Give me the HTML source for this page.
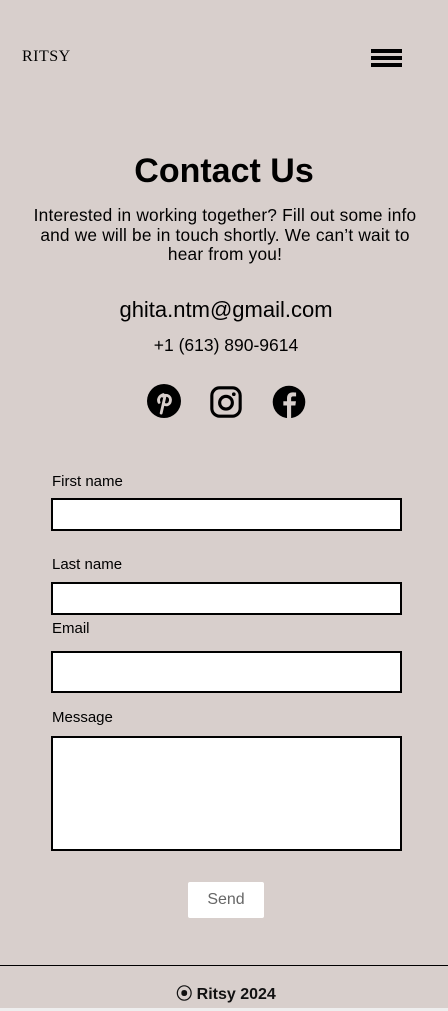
<!DOCTYPE html>
<html><head><style>
*{margin:0;padding:0;box-sizing:border-box}
body{width:448px;height:1011px;background:#d8cfcc;font-family:"Liberation Sans",sans-serif;color:#000;position:relative;overflow:hidden}
.a{position:absolute}
.logo{left:22px;top:48px;font-family:"Liberation Serif",serif;font-size:16px;letter-spacing:0.5px}
.bar{left:371px;width:31px;height:4px;background:#000}
h1{position:absolute;top:152px;width:448px;text-align:center;font-size:34px;font-weight:bold}
.intro{top:206px;left:29px;width:392px;text-align:center;font-size:17.3px;line-height:19.5px;letter-spacing:0.2px}
.c{width:448px;text-align:center}
label{position:absolute;left:52px;font-size:15px}
.in{position:absolute;left:51px;width:351px;background:#fff;border:2px solid #000}
.btn{left:188px;top:882px;width:76px;height:36px;background:#fff;border-radius:2px;text-align:center;line-height:36px;color:#666;font-size:16px}
</style></head><body>
<div class="a logo">RITSY</div>
<div class="a bar" style="top:49px"></div>
<div class="a bar" style="top:56px"></div>
<div class="a bar" style="top:63px"></div>
<h1>Contact Us</h1>
<div class="a intro">Interested in working together? Fill out some info and we will be in touch shortly. We can’t wait to hear from you!</div>
<div class="a c" style="top:297px;font-size:22px;left:2px">ghita.ntm@gmail.com</div>
<div class="a c" style="top:335px;font-size:17.5px;left:2px">+1 (613) 890-9614</div>
<svg class="a" style="left:147px;top:384px" width="34" height="34" viewBox="0 0 24 24"><circle cx="12" cy="12" r="12" fill="#000"/><path d="M11 8.5c3.5-1.5 6 .5 5.5 3.5-.4 2.5-3 3.5-4.5 2M12.5 9.5l-2.5 11" stroke="#d8cfcc" stroke-width="2" fill="none" stroke-linecap="round"/><path d="M8.5 13c-1-2 0-4.5 3-5.5" stroke="#d8cfcc" stroke-width="2" fill="none" stroke-linecap="round"/></svg>
<svg class="a" style="left:209px;top:385px" width="34" height="34" viewBox="0 0 24 24"><rect x="2" y="2" width="20" height="20" rx="5.5" fill="none" stroke="#000" stroke-width="2.2"/><circle cx="12" cy="12.5" r="4.5" fill="none" stroke="#000" stroke-width="2.2"/><circle cx="17.5" cy="6.5" r="1.3" fill="#000"/></svg>
<svg class="a" style="left:272px;top:385px" width="34" height="34" viewBox="0 0 24 24"><circle cx="12" cy="12" r="11.5" fill="#000"/><path d="M13.5 24V14.5h3l.4-3h-3.4V9.5c0-.9.3-1.5 1.6-1.5H17V5.3c-.3 0-1.3-.1-2.4-.1-2.4 0-4 1.5-4 4.1v2.2H8v3h2.6V24z" fill="#d8cfcc"/></svg>
<label style="top:473px">First name</label>
<div class="in" style="top:498px;height:33px"></div>
<label style="top:556px">Last name</label>
<div class="in" style="top:582px;height:33px"></div>
<label style="top:620px">Email</label>
<div class="in" style="top:651px;height:42px"></div>
<label style="top:709px">Message</label>
<div class="in" style="top:736px;height:115px"></div>
<div class="a btn">Send</div>
<div class="a" style="top:965px;left:0;width:448px;height:1px;background:#000"></div>
<div class="a c" style="top:980px;font-size:16px;font-weight:bold;color:#111;left:2px">⦿ Ritsy 2024</div>
<div class="a" style="top:1008px;left:0;width:448px;height:3px;background:#eee"></div>
</body></html>
